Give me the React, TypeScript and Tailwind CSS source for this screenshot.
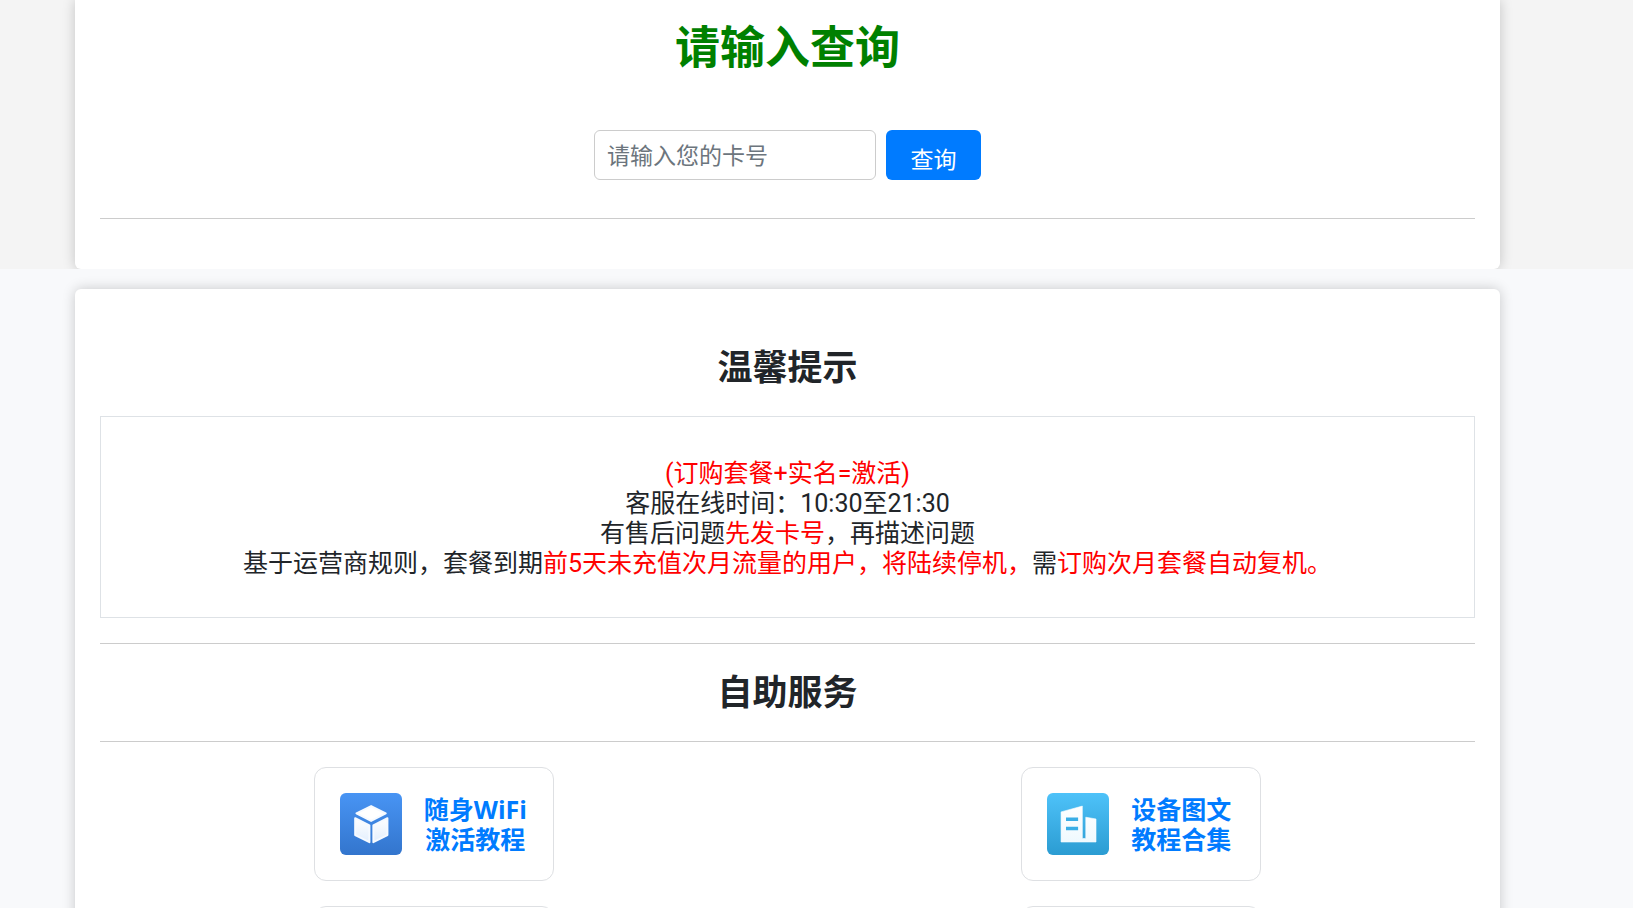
import type { ReactNode } from "react";

function CubeIcon() {
  return (
    <svg viewBox="0 0 63 63" className="size-[62px] shrink-0" aria-hidden="true">
      <defs>
        <linearGradient id="cube-bg" x1="0" y1="0" x2="0" y2="1">
          <stop offset="0" stopColor="#4894f4" />
          <stop offset="1" stopColor="#3375cd" />
        </linearGradient>
        <linearGradient id="cube-face" x1="0" y1="0" x2="0" y2="1">
          <stop offset="0" stopColor="#ffffff" />
          <stop offset="1" stopColor="#e2eefd" />
        </linearGradient>
      </defs>
      <rect width="63" height="63" rx="6" fill="url(#cube-bg)" />
      <g stroke="#f6faff" strokeWidth="2" strokeLinejoin="round">
        <path d="M31.6 13.3 46.5 20.6 31.6 28.4 16.7 20.6Z" fill="#fff" />
        <path d="M15.4 25.6 29.9 33V50L15.4 42.7Z" fill="url(#cube-face)" />
        <path d="M48.2 25.6 33.9 33V50L48.2 42.7Z" fill="url(#cube-face)" />
      </g>
    </svg>
  );
}

function BuildingIcon() {
  return (
    <svg viewBox="0 0 63 63" className="size-[62px] shrink-0" aria-hidden="true">
      <defs>
        <linearGradient id="building-bg" x1="0" y1="0" x2="0" y2="1">
          <stop offset="0" stopColor="#4ec2f9" />
          <stop offset="1" stopColor="#2b9cd2" />
        </linearGradient>
        <linearGradient id="building-face" x1="0" y1="0" x2="0" y2="1">
          <stop offset="0" stopColor="#ffffff" />
          <stop offset="1" stopColor="#eff9fe" />
        </linearGradient>
      </defs>
      <rect width="63" height="63" rx="6" fill="url(#building-bg)" />
      <path
        d="M14.3 19.2 35.9 13.3V46.2H39.4V24.6L49.8 26.4V49.8H14.3Z"
        fill="url(#building-face)"
        stroke="#fafdff"
        strokeWidth="0.6"
        strokeLinejoin="round"
      />
      <path d="M19.3 24.8H31.6V28.4H19.3ZM19.3 34.3H31.6V37.9H19.3Z" fill="#3aaee6" />
    </svg>
  );
}

function ServiceCard({ icon, lines }: { icon: ReactNode; lines: string[] }) {
  return (
    <a
      href="#service"
      className="flex h-[114px] w-60 items-center gap-[22px] rounded-xl border border-[#dee0e3] bg-white px-[25px] text-center text-[25px] leading-[30px] font-bold text-[#007bff]"
    >
      {icon}
      <span className="whitespace-nowrap">
        {lines.map((line) => (
          <span key={line} className="block">
            {line}
          </span>
        ))}
      </span>
    </a>
  );
}

function EmptyCard() {
  return <div className="h-[114px] w-60 rounded-xl border border-[#dee0e3] bg-white" />;
}

function Red({ children }: { children: ReactNode }) {
  return <span className="text-[#ff0000]">{children}</span>;
}

export default function App() {
  return (
    <div
      lang="zh-CN"
      className="flex h-screen flex-col overflow-hidden bg-[#f8f9fb] font-['Open_Sans','Noto_Sans_CJK_SC',sans-serif] text-[#212529]"
    >
      <section className="shrink-0 overflow-hidden bg-[#f4f4f4] pr-[133px] pl-[75px]">
        <div className="rounded-b-md bg-white px-[25px] pt-5 pb-[50px] shadow-[0_0_13px_rgba(0,0,0,0.2)]">
          <h1 className="text-center text-[45px] leading-[54px] font-bold text-[#008000]">请输入查询</h1>
          <form className="mt-14 flex justify-center gap-2.5" onSubmit={(e) => e.preventDefault()}>
            <input
              type="text"
              aria-label="卡号"
              placeholder="请输入您的卡号"
              className="h-[50px] w-[282px] rounded-md border border-[#cccccc] bg-white px-3 text-[23px] placeholder:text-[#6c757d]"
            />
            <button
              type="submit"
              className="h-[50px] w-[95px] rounded-md bg-[#007bff] pt-2 text-[23px] leading-[34px] text-white"
            >
              查询
            </button>
          </form>
          <hr className="mt-[38px] border-[#cccccc]" />
        </div>
      </section>

      <section className="grow pt-5 pr-[133px] pl-[75px]">
        <div className="rounded-md bg-white px-[25px] pt-[57px] pb-[50px] shadow-[0_0_13px_rgba(0,0,0,0.2)]">
          <h2 className="text-center text-[35px] leading-[42px] font-bold">温馨提示</h2>
          <div className="mt-7 border border-[#dee2e6] pt-[42px] pb-[38px] text-center font-['Roboto','Noto_Sans_CJK_SC',sans-serif] text-[25px] leading-[30px]">
            <p>
              <Red>(订购套餐+实名=激活)</Red>
            </p>
            <p>客服在线时间：10:30至21:30</p>
            <p>
              有售后问题<Red>先发卡号</Red>，再描述问题
            </p>
            <p>
              基于运营商规则，套餐到期<Red>前5天未充值次月流量的用户，将陆续停机，</Red>需
              <Red>订购次月套餐自动复机。</Red>
            </p>
          </div>
          <hr className="mt-[25px] border-[#cccccc]" />
          <h2 className="mt-[27px] text-center text-[35px] leading-[42px] font-bold">自助服务</h2>
          <hr className="mt-7 border-[#cccccc]" />
          <div className="mt-[25px] grid grid-cols-2 justify-items-center gap-x-10 gap-y-[25px]">
            <ServiceCard icon={<CubeIcon />} lines={["随身WiFi", "激活教程"]} />
            <ServiceCard icon={<BuildingIcon />} lines={["设备图文", "教程合集"]} />
            <EmptyCard />
            <EmptyCard />
          </div>
        </div>
      </section>
    </div>
  );
}
